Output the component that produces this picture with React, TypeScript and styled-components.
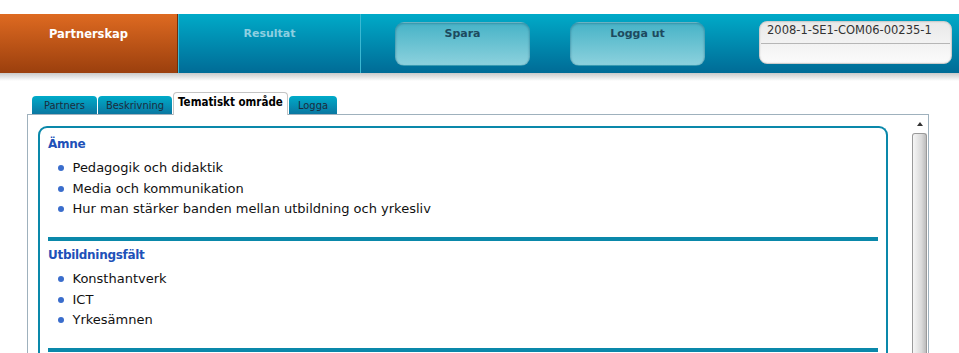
import React from 'react';
import styled, { createGlobalStyle } from 'styled-components';

const GlobalStyle = createGlobalStyle`
  html, body {
    margin: 0;
    padding: 0;
    background: #fff;
    overflow: hidden;
  }
  body {
    font-family: "DejaVu Sans", Verdana, sans-serif;
    color: #111;
  }
`;

const TopStrip = styled.div`
  height: 14px;
`;

const Header = styled.header`
  display: flex;
  height: 59px;
  background: linear-gradient(#00aac8, #006b96);
`;

const NavItem = styled.div<{ $primary?: boolean; $width: number }>`
  box-sizing: border-box;
  width: ${props => props.$width}px;
  padding-top: 13px;
  text-align: center;
  font-size: ${props => (props.$primary ? '11.5px' : '11px')};
  line-height: 14px;
  font-weight: bold;
  color: ${props => (props.$primary ? '#ffffff' : '#8dcfe1')};
  background: ${props =>
    props.$primary ? 'linear-gradient(#de6a21, #9b3f0d)' : 'transparent'};
  border-right: 1px solid ${props => (props.$primary ? '#6f2e0b' : '#3bb8d2')};
  border-left: ${props => (props.$primary ? 'none' : '1px solid #3bb8d2')};
`;

const Actions = styled.div`
  display: flex;
  gap: 40px;
  padding: 8px 0 0 34px;
`;

const ActionButton = styled.div`
  box-sizing: border-box;
  width: 135px;
  height: 44px;
  padding-top: 4px;
  border-radius: 9px;
  border: 1px solid rgba(0, 70, 100, 0.22);
  background: linear-gradient(#47b3c7, #8cd1dd);
  box-shadow: inset 0 1px 2px rgba(0, 50, 80, 0.25);
  text-align: center;
  font-size: 11px;
  line-height: 14px;
  font-weight: bold;
  color: #1d4a5e;
`;

const IdBox = styled.div`
  box-sizing: border-box;
  display: flex;
  flex-direction: column;
  width: 193px;
  height: 43px;
  margin: 7px 7px 0 auto;
  border: 1px solid #cdcdcd;
  border-radius: 8px;
  background: linear-gradient(#e9e9e9, #fbfbfb);
  box-shadow: inset 0 0 2px rgba(0, 0, 0, 0.12);
`;

const IdValue = styled.div`
  box-sizing: border-box;
  height: 22px;
  margin: 0 1px;
  padding: 1px 6px 0;
  border-bottom: 1px solid #b6b6b6;
  font-size: 11.5px;
  line-height: 14px;
  color: #333;
`;

const HeaderShadow = styled.div`
  height: 8px;
  background: linear-gradient(#c9c9c9, #ffffff);
`;

const Main = styled.main`
  padding: 11px 0 0 27px;
`;

const TabRow = styled.div`
  display: flex;
  align-items: flex-end;
  gap: 1px;
  height: 22px;
  padding-left: 5px;
`;

const Tab = styled.div<{ $active?: boolean; $width: number }>`
  box-sizing: border-box;
  width: ${props => props.$width}px;
  font-family: "DejaVu Sans Condensed", "DejaVu Sans", sans-serif;
  font-stretch: condensed;
  text-align: center;
  border-radius: 4px 4px 0 0;
  white-space: nowrap;
  ${props =>
    props.$active
      ? `
    position: relative;
    z-index: 1;
    height: 23px;
    margin-bottom: -1px;
    padding-top: 1px;
    background: #fff;
    border: 1px solid #c4c4c4;
    border-bottom: none;
    font-size: 11.5px;
    line-height: 17px;
    font-weight: bold;
    color: #000;
  `
      : `
    height: 18px;
    padding-top: 1px;
    background: linear-gradient(#00abc9, #0a77a1);
    font-size: 11px;
    line-height: 17px;
    color: #1b2c3c;
  `}
`;

const Panel = styled.section`
  box-sizing: border-box;
  display: flex;
  width: 902px;
  height: 260px;
  border: 1px solid #9fb1bd;
  border-bottom: none;
`;

const Content = styled.div`
  flex: 1;
  padding: 11px 24px 0 10px;
`;

const InnerBox = styled.div`
  min-height: 300px;
  padding: 0 8px;
  border: 2px solid #0a88aa;
  border-bottom: none;
  border-radius: 9px 9px 0 0;
`;

const Section = styled.div`
  padding: 6px 0 17.5px;
  border-bottom: 4px solid #0a88aa;

  &:first-child {
    padding-top: 8px;
  }
`;

const Heading = styled.h3`
  margin: 0 0 6px;
  font-size: 12px;
  line-height: 16px;
  font-weight: bold;
  letter-spacing: -0.3px;
  color: #2050b8;
`;

const List = styled.ul`
  list-style: none;
  margin: 0;
  padding: 0 0 0 10px;
`;

const Item = styled.li`
  display: flex;
  align-items: center;
  font-size: 13px;
  line-height: 20.5px;
  color: #111;

  &::before {
    content: '';
    width: 6px;
    height: 6px;
    margin-right: 8.5px;
    border-radius: 50%;
    background: #3a6dcc;
  }
`;

const Scrollbar = styled.div`
  display: flex;
  flex-direction: column;
  width: 16px;
  background: #fff;
`;

const ArrowUp = styled.div`
  display: flex;
  align-items: center;
  justify-content: center;
  height: 18px;

  &::after {
    content: '';
    border-left: 3.5px solid transparent;
    border-right: 3.5px solid transparent;
    border-bottom: 4px solid #333;
  }
`;

const Thumb = styled.div`
  flex: 1;
  margin-right: 1px;
  border: 1px solid #9a9a9a;
  border-bottom: none;
  border-radius: 3px 3px 0 0;
  background: linear-gradient(to right, #f6f6f6, #dadada 65%, #bcbcbc);
`;

const sections = [
  {
    title: 'Ämne',
    items: [
      'Pedagogik och didaktik',
      'Media och kommunikation',
      'Hur man stärker banden mellan utbildning och yrkesliv',
    ],
  },
  {
    title: 'Utbildningsfält',
    items: ['Konsthantverk', 'ICT', 'Yrkesämnen'],
  },
];

const tabs = [
  { label: 'Partners', width: 65 },
  { label: 'Beskrivning', width: 74 },
  { label: 'Tematiskt område', width: 115, active: true },
  { label: 'Logga', width: 48 },
];

const App: React.FC = () => {
  return (
    <>
      <GlobalStyle />
      <TopStrip />
      <Header>
        <NavItem $primary $width={178}>Partnerskap</NavItem>
        <NavItem $width={183}>Resultat</NavItem>
        <Actions>
          <ActionButton>Spara</ActionButton>
          <ActionButton>Logga ut</ActionButton>
        </Actions>
        <IdBox>
          <IdValue>2008-1-SE1-COM06-00235-1</IdValue>
        </IdBox>
      </Header>
      <HeaderShadow />
      <Main>
        <TabRow>
          {tabs.map(tab => (
            <Tab key={tab.label} $active={tab.active} $width={tab.width}>
              {tab.label}
            </Tab>
          ))}
        </TabRow>
        <Panel>
          <Content>
            <InnerBox>
              {sections.map(section => (
                <Section key={section.title}>
                  <Heading>{section.title}</Heading>
                  <List>
                    {section.items.map(item => (
                      <Item key={item}>{item}</Item>
                    ))}
                  </List>
                </Section>
              ))}
            </InnerBox>
          </Content>
          <Scrollbar>
            <ArrowUp />
            <Thumb />
          </Scrollbar>
        </Panel>
      </Main>
    </>
  );
};

export default App;
